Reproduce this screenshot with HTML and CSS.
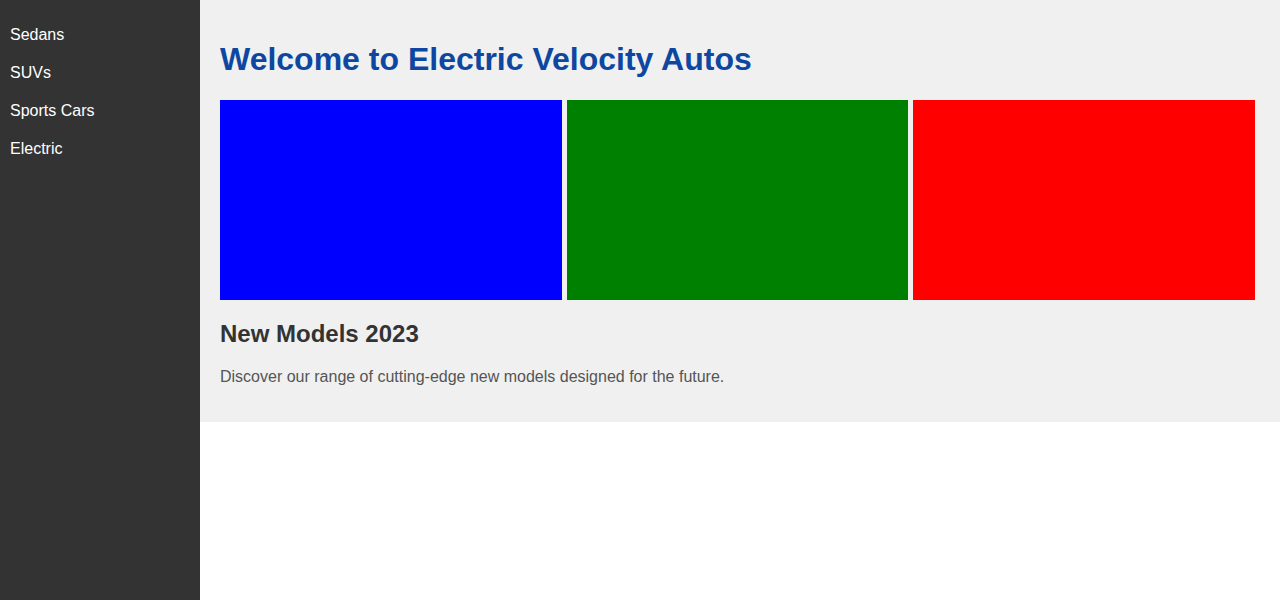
FILE: index.html
```html
<!DOCTYPE html>
<html lang="en">
<head>
<meta charset="utf-8">
<title>Electric Velocity Autos</title>
<link rel="stylesheet" href="styles.css">
</head>
<body>
<nav class="sidebar">
  <ul class="nav-list">
    <li class="nav-item">Sedans</li>
    <li class="nav-item">SUVs</li>
    <li class="nav-item">Sports Cars</li>
    <li class="nav-item">Electric</li>
  </ul>
</nav>
<main class="main">
  <h1 class="title">Welcome to Electric Velocity Autos</h1>
  <div class="gallery">
    <div class="tile tile-blue"></div>
    <div class="tile tile-green"></div>
    <div class="tile tile-red"></div>
  </div>
  <h2 class="subtitle">New Models 2023</h2>
  <p class="text">Discover our range of cutting-edge new models designed for the future.</p>
</main>
</body>
</html>
```

FILE: styles.css
```css
html, body {
  margin: 0;
  padding: 0;
}
body {
  display: flex;
  align-items: flex-start;
  font-family: "Liberation Sans", Arial, sans-serif;
  background: #fff;
}
.sidebar {
  width: 200px;
  flex: 0 0 200px;
  height: 100vh;
  background: #333;
}
.nav-list {
  list-style: none;
  margin: 16px 0;
  padding: 0;
}
.nav-item {
  padding: 10px;
  font-size: 16px;
  color: #fff;
}
.main {
  flex: 1;
  background: #f0f0f0;
  padding: 20px 25px 20px 20px;
}
.title {
  font-size: 32px;
  color: #0d47a1;
  margin: 21.44px 0;
}
.gallery {
  display: grid;
  grid-template-columns: repeat(3, 1fr);
  gap: 5px;
}
.tile {
  height: 200px;
}
.tile-blue { background: #0000ff; }
.tile-green { background: #008000; }
.tile-red { background: #ff0000; }
.subtitle {
  font-size: 24px;
  color: #333;
  margin: 19.92px 0;
}
.text {
  font-size: 16px;
  color: #555;
  margin: 16px 0;
}
```
